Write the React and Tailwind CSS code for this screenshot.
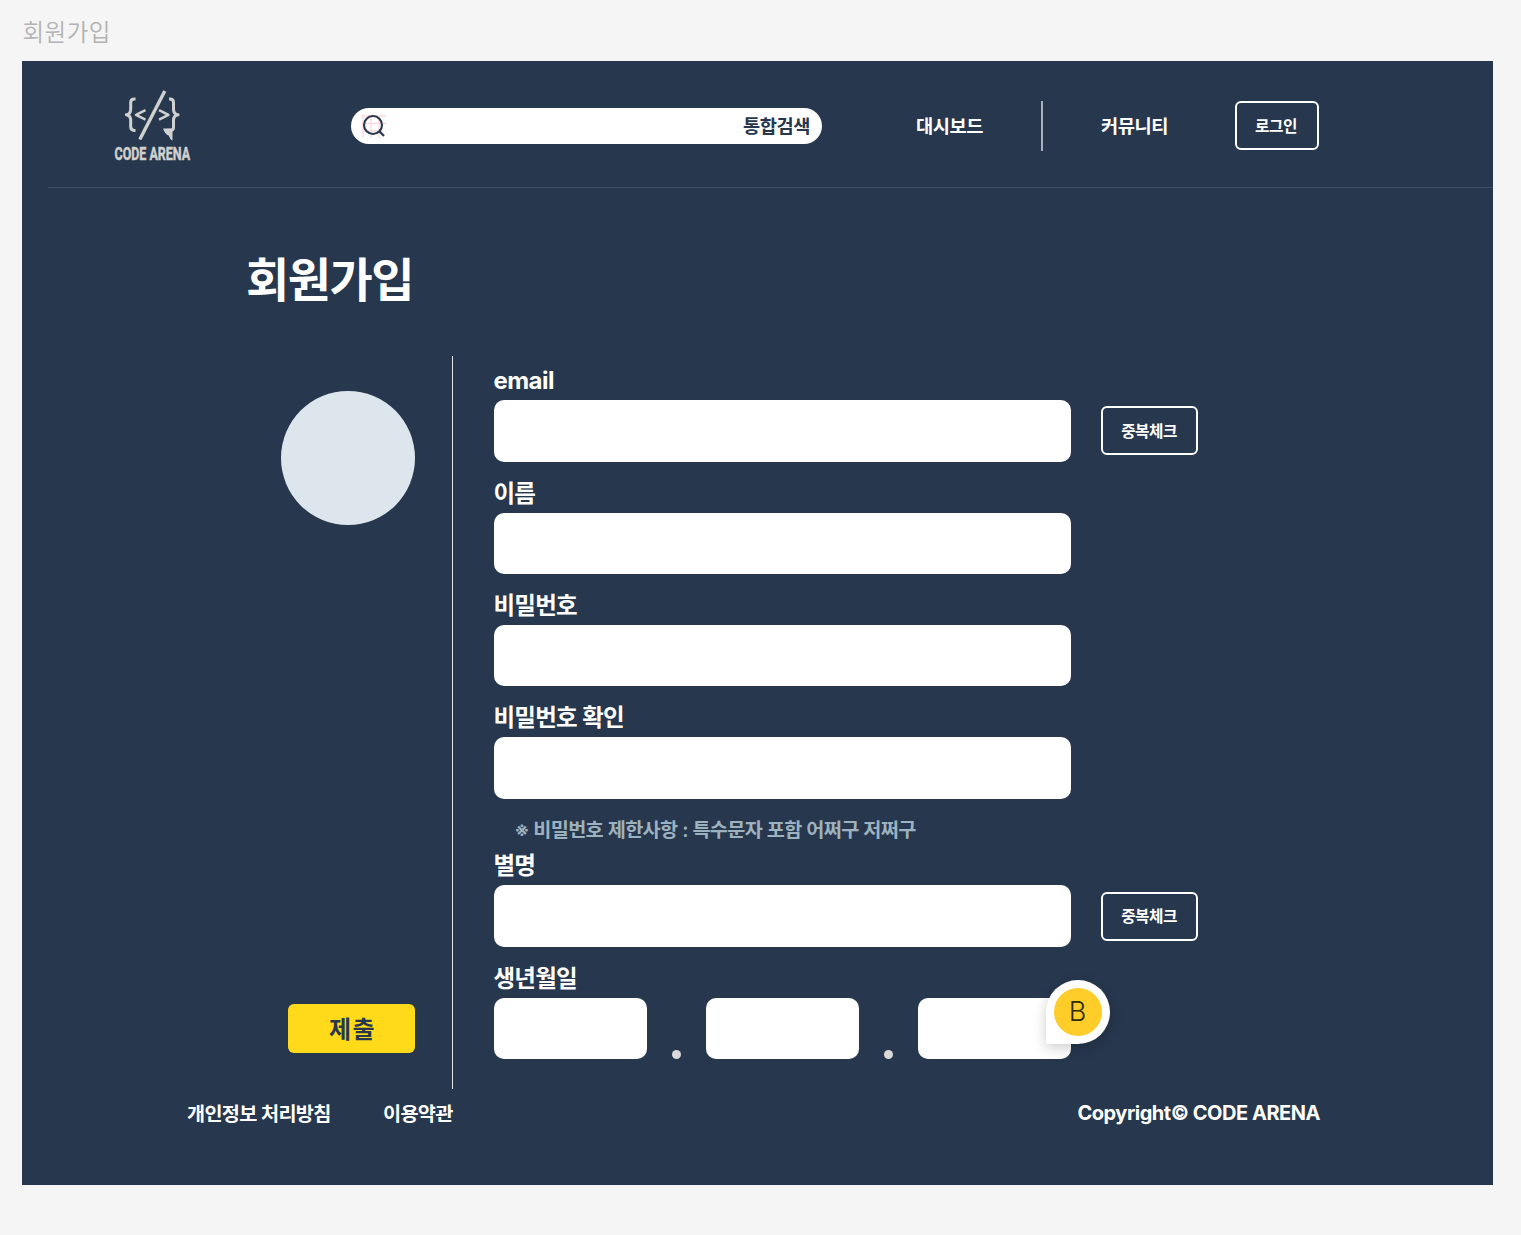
import React from "react";

const FONT = "font-['Inter','Noto_Sans_CJK_KR',sans-serif]";

function Logo() {
  return (
    <svg width="84" height="80" viewBox="0 0 84 80" className="block shrink-0 overflow-visible" fill="none">
      <g stroke="#d0d0d0" strokeWidth="3" strokeLinejoin="round">
        <path d="M25.500 13h-1.200q-3.600 0-3.600 3.600v6.600q0 4.900-4.400 5.600q4.400.7 4.400 5.600v6.400q0 3.600 3.600 3.600h1.200" />
        <path d="M59 13h.9q3.600 0 3.600 3.600v6.600q0 4.900 4.600 5.600q-4.600.7-4.600 5.600v6.900q0 3-3 3h-4" />
        <path d="M35.500 24.200l-9.500 4.700l9.500 4.700" strokeWidth="2.400" />
        <path d="M49 24.200l9.500 4.700l-9.500 4.700" strokeWidth="2.400" />
        <path d="M54.800 5L29.800 53.500" strokeWidth="3.400" />
      </g>
      <path d="M53 42.500h9.500v12.300q-2.600-1.500-3.800-5.300q-3.700-1-5.700-7z" fill="#d0d0d0" />
      <text
        x="4.500"
        y="74.200"
        textLength="75.500"
        lengthAdjust="spacingAndGlyphs"
        fill="#d0d0d0"
        stroke="#d0d0d0"
        strokeWidth="0.500"
        fontFamily="Roboto"
        fontWeight="700"
        fontSize="17.500"
      >
        CODE ARENA
      </text>
    </svg>
  );
}

function SearchIcon() {
  return (
    <svg width="24" height="26" viewBox="0 0 24 26" className="block shrink-0" fill="none">
      <path d="M0 3h24M0 10.500h24M0 18h20M1 2v23M9 2v23M17 2v23" stroke="#fbd9dc" strokeWidth="1.300" />
      <circle cx="11" cy="12" r="9" stroke="#27374d" strokeWidth="2.100" />
      <path d="M17 18l5 5" stroke="#27374d" strokeWidth="2.300" />
    </svg>
  );
}

function OutlineButton({ children, className }) {
  return (
    <button
      className={`flex shrink-0 items-center justify-center rounded-md border-2 border-white pt-[2px] pr-[1px] text-[15.700px] font-semibold tracking-[-0.500px] whitespace-nowrap ${className}`}
    >
      {children}
    </button>
  );
}

function Label({ children }) {
  return (
    <div className="-ml-[0.500px] h-[39px] text-[23.500px] leading-[39px] font-semibold tracking-[-0.750px] whitespace-nowrap">
      {children}
    </div>
  );
}

function Field({ label, check }) {
  return (
    <div className="h-[112.400px]">
      <Label>{label}</Label>
      <div className="flex items-center">
        <div className="h-[61.300px] w-[577px] rounded-[10px] bg-white" />
        {check && <OutlineButton className="ml-[30px] h-[49px] w-[97px]">중복체크</OutlineButton>}
      </div>
    </div>
  );
}

function Dot() {
  return <div className="h-[9px] w-[9px] rounded-full bg-[#d9d9d9]" />;
}

export default function App() {
  return (
    <div className={`h-[1235px] w-[1521px] overflow-hidden bg-[#f5f5f5] pl-[22px] ${FONT}`}>
      <div className="h-[61px] pt-[13px] pl-[0.500px] text-[23.500px] leading-[40px] font-[350] tracking-[0.500px] text-[#b3b3b3]">
        회원가입
      </div>

      <main className="h-[1124px] w-[1471px] bg-[#27374d] text-white">
        <header className="flex h-[126px] items-center">
          <div className="ml-[88px] pt-[4px]">
            <Logo />
          </div>
          <div className="ml-[157px] mt-[4px] flex h-[36px] w-[471px] items-center justify-between rounded-full bg-white pr-[12px] pl-[11px] text-[#27374d]">
            <SearchIcon />
            <span className="pt-[2px] text-[18.700px] font-semibold tracking-[-0.430px]">통합검색</span>
          </div>
          <nav className="mt-[4px] flex items-center text-[18.700px] font-semibold whitespace-nowrap">
            <span className="ml-[94px] w-[67px] pt-[2px] tracking-[-0.430px]">대시보드</span>
            <span className="ml-[58px] h-[50px] w-[2px] bg-[#a9afb8]" />
            <span className="ml-[58px] w-[67px] pt-[2px] tracking-[-0.430px]">커뮤니티</span>
            <OutlineButton className="-mt-[1px] ml-[66.500px] h-[49px] w-[84px]">로그인</OutlineButton>
          </nav>
        </header>
        <div className="ml-[26px] h-px bg-[#3c4f66]" />

        <h1 className="ml-[224px] h-[168px] pt-[60px] text-[47px] leading-[63px] font-semibold tracking-[-1.500px]">
          회원가입
        </h1>

        <div className="flex h-[733px]">
          <aside className="flex w-[431px] flex-col items-end border-r border-[#e4e6e9] pr-[37px] text-[#27374d]">
            <div className="mt-[35px] h-[134px] w-[134px] rounded-full bg-[#dde6ed]" />
            <button className="mt-[479px] h-[49px] w-[127px] rounded-md bg-[#ffda1a] pt-[2px] pl-[2px] text-[24px] font-bold tracking-[1.500px]">
              제출
            </button>
          </aside>

          <form className="ml-[41px] pt-[5.300px]">
            <Field label={<span className="text-[24px] font-bold tracking-[-0.550px]">email</span>} check />
            <Field label="이름" />
            <Field label="비밀번호" />
            <Field label="비밀번호 확인" />
            <p className="-mt-[1px] h-[36.500px] pl-[20.500px] text-[19.700px] leading-[40px] font-semibold tracking-[-0.680px] [word-spacing:0.400px] whitespace-nowrap text-[#9db2bf]">
              ※ 비밀번호 제한사항 : 특수문자 포함 어쩌구 저쩌구
            </p>
            <Field label="별명" check />
            <div className="relative w-[577px]">
              <Label>생년월일</Label>
              <div className="flex items-end justify-between">
                <div className="h-[61.300px] w-[153px] rounded-[10px] bg-white" />
                <Dot />
                <div className="h-[61.300px] w-[153px] rounded-[10px] bg-white" />
                <Dot />
                <div className="h-[61.300px] w-[153px] rounded-[10px] bg-white" />
              </div>
              <div className="absolute top-[21px] left-[551.500px] flex h-[64px] w-[64px] items-center justify-center rounded-full rounded-bl-none bg-white shadow-[0_4px_14px_rgba(0,0,0,0.2)]">
                <div className="flex h-[48px] w-[48px] items-center justify-center rounded-full bg-[#ffcd29] text-[27px] leading-none font-light text-[#332900]">
                  B
                </div>
              </div>
            </div>
          </form>
        </div>

        <footer className="flex items-center pt-[4px] text-[19.700px] leading-[42px] font-semibold whitespace-nowrap">
          <span className="ml-[165px] w-[144px] tracking-[-0.680px]">개인정보 처리방침</span>
          <span className="ml-[52px] tracking-[-0.680px]">이용약관</span>
          <span className="mr-[173px] ml-auto pb-[2px] text-[20px] leading-[40px] font-bold tracking-[-0.470px]">Copyright© CODE ARENA</span>
        </footer>
      </main>
    </div>
  );
}
